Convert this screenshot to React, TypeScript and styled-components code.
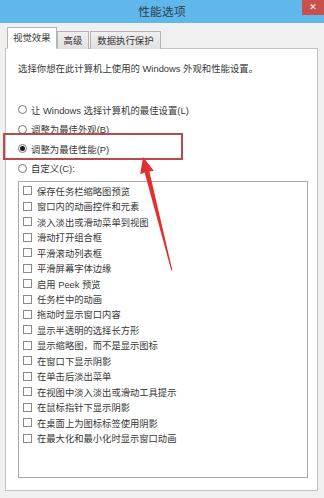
import React from "react";
import styled, { createGlobalStyle } from "styled-components";

const Global = createGlobalStyle`
  html, body { margin: 0; padding: 0; background: #f0f0f0; }
  * { box-sizing: border-box; }
`;

const FONT = `"Liberation Sans", "Noto Sans CJK SC", sans-serif`;

const Window = styled.div`
  position: relative;
  width: 324px;
  height: 498px;
  overflow: hidden;
  background: #f0f0f0;
  font-family: ${FONT};
  color: #383838;
  display: flex;
  flex-direction: column;
`;

const TitleBar = styled.div`
  height: 23px;
  flex: none;
  background: #5fb7ea;
  display: grid;
  grid-template-columns: 1fr auto 1fr;
  align-items: start;
`;

const Title = styled.div`
  grid-column: 2;
  height: 23px;
  line-height: 23px;
  font-size: 11.7px;
  color: #2c3e50;
  letter-spacing: 0.2px;
`;

const CloseButton = styled.div`
  grid-column: 3;
  justify-self: end;
  width: 22px;
  height: 15px;
  background: #c9514d;
  color: #fff;
  font-family: "DejaVu Sans", sans-serif;
  font-size: 9px;
  line-height: 15px;
  text-align: center;
`;

const Body = styled.div`
  flex: 1;
  padding: 5px 6px 0 5px;
  display: flex;
  flex-direction: column;
`;

const TabRow = styled.div`
  height: 21px;
  display: flex;
  align-items: flex-end;
  padding-left: 2px;
  position: relative;
  z-index: 1;
  margin-bottom: -1px;
`;

const Tab = styled.div<{ $active?: boolean }>`
  height: ${(p) => (p.$active ? 22 : 18)}px;
  padding: 0 ${(p) => (p.$active ? 5 : 6)}px;
  margin-right: ${(p) => (p.$active ? 0 : 1)}px;
  border: 1px solid #b4b4b4;
  border-bottom: ${(p) => (p.$active ? "1px solid #fff" : "none")};
  background: ${(p) =>
    p.$active ? "#fff" : "linear-gradient(#efefef, #e1e1e1)"};
  font-size: 9.4px;
  line-height: ${(p) => (p.$active ? 20 : 17)}px;
  color: #333;
  white-space: nowrap;
`;

const Panel = styled.div`
  height: 443px;
  background: #fff;
  border: 1px solid #c3c3c3;
  padding: 13px 9px 0 12px;
  display: flex;
  flex-direction: column;
`;

const Intro = styled.div`
  font-size: 9.4px;
  line-height: 14px;
  height: 14px;
  white-space: nowrap;
  margin-bottom: 24px;
`;

const RadioRow = styled.div`
  height: 19.5px;
  display: flex;
  align-items: center;
  gap: 4px;
  font-size: 9.4px;
  white-space: nowrap;
`;

const RadioDot = styled.span<{ $checked?: boolean }>`
  width: 9px;
  height: 9px;
  border-radius: 50%;
  border: 1px solid #7a7a7a;
  background: #fff;
  display: inline-flex;
  align-items: center;
  justify-content: center;
  flex: none;
  &::after {
    content: "";
    width: 5px;
    height: 5px;
    border-radius: 50%;
    background: ${(p) => (p.$checked ? "#1a1a1a" : "transparent")};
  }
`;

const ListBox = styled.div`
  margin-top: 3px;
  height: 297px;
  border: 1px solid #a8a8a8;
  padding: 1px 0 0 4px;
  display: flex;
  flex-direction: column;
`;

const CheckRow = styled.div`
  height: 15.48px;
  display: flex;
  align-items: center;
  gap: 5px;
  font-size: 9.3px;
  white-space: nowrap;
`;

const CheckBox = styled.span`
  width: 9px;
  height: 9px;
  border: 1px solid #8a8a8a;
  background: #fff;
  flex: none;
`;

const Highlight = styled.div`
  position: absolute;
  left: 3px;
  top: 133px;
  width: 180px;
  height: 27px;
  border: 2px solid #b84a4c;
  pointer-events: none;
`;

const ArrowSvg = styled.svg`
  position: absolute;
  left: 0;
  top: 0;
  pointer-events: none;
`;

const radios = [
  { label: "让 Windows 选择计算机的最佳设置(L)" },
  { label: "调整为最佳外观(B)" },
  { label: "调整为最佳性能(P)", checked: true },
  { label: "自定义(C):" },
];

const checks = [
  "保存任务栏缩略图预览",
  "窗口内的动画控件和元素",
  "淡入淡出或滑动菜单到视图",
  "滑动打开组合框",
  "平滑滚动列表框",
  "平滑屏幕字体边缘",
  "启用 Peek 预览",
  "任务栏中的动画",
  "拖动时显示窗口内容",
  "显示半透明的选择长方形",
  "显示缩略图，而不是显示图标",
  "在窗口下显示阴影",
  "在单击后淡出菜单",
  "在视图中淡入淡出或滑动工具提示",
  "在鼠标指针下显示阴影",
  "在桌面上为图标标签使用阴影",
  "在最大化和最小化时显示窗口动画",
];

export default function App() {
  return (
    <>
      <Global />
      <Window>
        <TitleBar>
          <Title>性能选项</Title>
          <CloseButton>✕</CloseButton>
        </TitleBar>
        <Body>
          <TabRow>
            <Tab $active>视觉效果</Tab>
            <Tab>高级</Tab>
            <Tab>数据执行保护</Tab>
          </TabRow>
          <Panel>
            <Intro>选择你想在此计算机上使用的 Windows 外观和性能设置。</Intro>
            {radios.map((r) => (
              <RadioRow key={r.label}>
                <RadioDot $checked={r.checked} />
                {r.label}
              </RadioRow>
            ))}
            <ListBox>
              {checks.map((c) => (
                <CheckRow key={c}>
                  <CheckBox />
                  {c}
                </CheckRow>
              ))}
            </ListBox>
          </Panel>
        </Body>
        <Highlight />
        <ArrowSvg width="324" height="498" viewBox="0 0 324 498">
          <polygon
            points="143,157 153.8,170.8 149.4,171.4 172.3,270 171.2,270.2 144.6,172.6 140.2,174.2"
            fill="#e3302e"
          />
        </ArrowSvg>
      </Window>
    </>
  );
}
